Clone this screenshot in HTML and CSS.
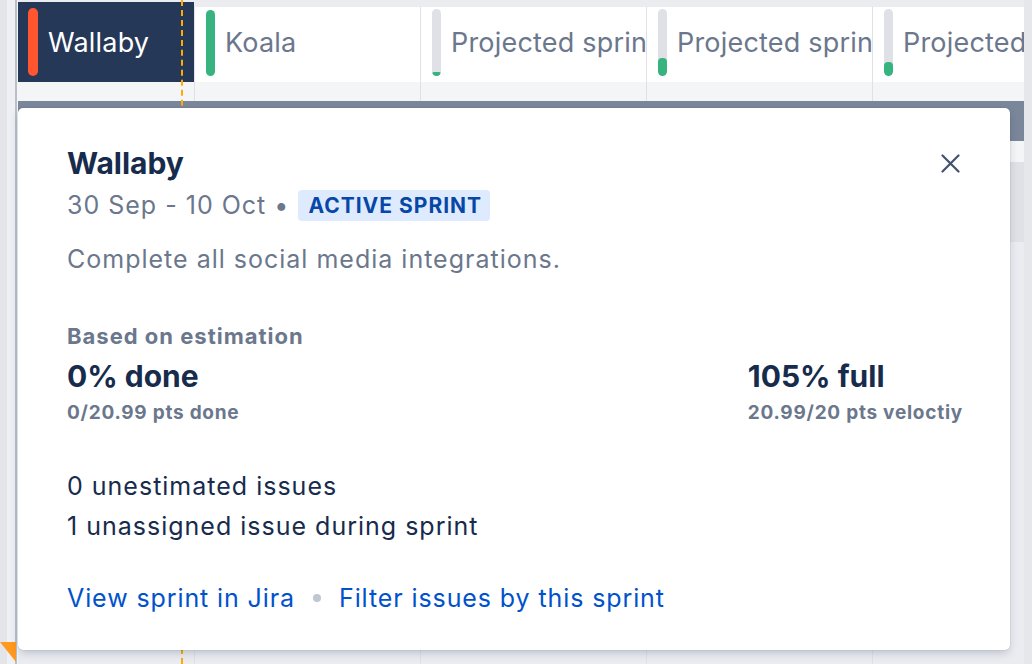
FILE: index.html
```html
<!DOCTYPE html>
<html>
<head>
    <meta charset="UTF-8">
    <title>Sprint details</title>
    <link rel="stylesheet" href="styles.css">
</head>
<body>
    <div class="screen">
        <div class="gutter">
            <span class="corner"></span>
        </div>

        <div class="board">
            <div class="sprints">
                <div class="sprint active">
                    <span class="status red"></span>
                    <span class="name">Wallaby</span>
                </div>
                <div class="sprint">
                    <span class="status green"></span>
                    <span class="name">Koala</span>
                </div>
                <div class="sprint">
                    <span class="status"><span class="fill" style="height: 4px"></span></span>
                    <span class="name">Projected sprint 1</span>
                </div>
                <div class="sprint">
                    <span class="status"><span class="fill" style="height: 18px"></span></span>
                    <span class="name">Projected sprint 2</span>
                </div>
                <div class="sprint">
                    <span class="status"><span class="fill" style="height: 14px"></span></span>
                    <span class="name">Projected sprint 3</span>
                </div>
            </div>

            <div class="row sub">
                <div></div><div></div><div></div><div></div><div></div>
            </div>
            <div class="row timeline"></div>
            <div class="row thin">
                <div></div><div></div><div></div><div></div><div></div>
            </div>
            <div class="row band">
                <div></div><div></div><div></div><div></div><div></div>
            </div>
            <div class="row rest">
                <div></div><div></div><div></div><div></div><div></div>
            </div>

            <div class="today"></div>
        </div>

        <div class="edge"></div>

        <div class="popup">
            <div class="popup-head">
                <div>
                    <h2>Wallaby</h2>
                    <div class="dates">
                        30 Sep - 10 Oct &bull;
                        <span class="lozenge">Active sprint</span>
                    </div>
                </div>
                <button class="close" aria-label="Close">
                    <svg width="19" height="19" viewBox="0 0 19 19">
                        <path d="M1.5 1.5 L17.5 17.5 M17.5 1.5 L1.5 17.5" stroke="#42526e" stroke-width="2.2" stroke-linecap="round" fill="none"/>
                    </svg>
                </button>
            </div>

            <p class="goal">Complete all social media integrations.</p>

            <div class="label">Based on estimation</div>
            <div class="stats">
                <div class="stat">
                    <div class="big">0% done</div>
                    <div class="small">0/20.99 pts done</div>
                </div>
                <div class="stat">
                    <div class="big">105% full</div>
                    <div class="small">20.99/20 pts veloctiy</div>
                </div>
            </div>

            <div class="issues">
                <div>0 unestimated issues</div>
                <div>1 unassigned issue during sprint</div>
            </div>

            <div class="links">
                <a href="#">View sprint in Jira</a>
                <span class="sep"></span>
                <a href="#">Filter issues by this sprint</a>
            </div>
        </div>
    </div>
</body>
</html>
```

FILE: styles.css
```css
body {
    margin: 0;
    background-color: #e6e7eb;
    font-family: Inter, "Noto Sans", sans-serif;
    color: #172b4d;
}
.screen {
    position: relative;
    display: flex;
    width: 1032px;
    height: 664px;
    overflow: hidden;
}
.gutter {
    position: relative;
    width: 18px;
    flex-shrink: 0;
    background: linear-gradient(to right, #e4e5e9 0 7px, #eff0f3 7px 15px, #b9c0ca 15px 17px, #f4f5f7 17px);
}
.corner {
    position: absolute;
    left: 0;
    bottom: 2px;
    width: 16px;
    height: 20px;
    background-color: #ff991f;
    clip-path: polygon(0 0, 100% 0, 100% 100%);
}
.board {
    position: relative;
    width: 1006px;
    padding-top: 7px;
    background-color: #ebecf0;
}
.edge {
    width: 8px;
    background-color: #e6e7eb;
}

/* sprint header */
.sprints {
    display: grid;
    grid-template-columns: 176px 226px 226px 226px 152px;
    height: 75px;
    background-color: white;
}
.sprint {
    display: flex;
    align-items: center;
    gap: 10px;
    padding-left: 11px;
    overflow: hidden;
    white-space: nowrap;
    border-left: 1px solid #dfe1e6;
}
.sprint.active {
    background-color: #253858;
    margin-top: -5px;
    padding-left: 10px;
    border-left: none;
}
.sprint .name {
    font-size: 27px;
    letter-spacing: 0.2px;
    color: #6b778c;
    margin-bottom: 4px;
}
.sprint.active .name {
    color: white;
    margin-bottom: 0;
}
.status {
    position: relative;
    flex-shrink: 0;
    width: 9px;
    height: 67px;
    border-radius: 5px;
    background-color: #dfe1e6;
    overflow: hidden;
    align-self: flex-end;
    margin-bottom: 6px;
}
.status.red {
    background-color: #ff5630;
    width: 10px;
    height: 68px;
}
.status.green {
    background-color: #36b37e;
    height: 66px;
}
.status .fill {
    position: absolute;
    left: 0;
    right: 0;
    bottom: 0;
    background-color: #36b37e;
    border-radius: 4px;
}

/* rows under the header */
.row {
    display: grid;
    grid-template-columns: 176px 226px 226px 226px 152px;
}
.row div + div {
    border-left: 1px solid #dfe1e6;
}
.sub {
    height: 19px;
    background-color: #f4f5f7;
}
.timeline {
    height: 40px;
    background-color: #7a869a;
}
.thin {
    height: 21px;
    background-color: #f4f5f7;
}
.band {
    height: 80px;
    background-color: #dfe1e6;
}
.band div + div {
    border-left-color: #d3d6dd;
}
.rest {
    height: 422px;
    background-color: #ebecf0;
}
.today {
    position: absolute;
    top: 0;
    bottom: 0;
    left: 163px;
    border-left: 2px dashed #ffab00;
}

/* popup */
.popup {
    position: absolute;
    left: 18px;
    top: 108px;
    width: 992px;
    height: 542px;
    box-sizing: border-box;
    padding: 37px 47px 0 49px;
    background-color: white;
    border-radius: 5px;
    box-shadow: 0 4px 10px -2px rgba(9, 30, 66, 0.25), 0 0 1px rgba(9, 30, 66, 0.31);
}
.popup-head {
    display: flex;
    justify-content: space-between;
    align-items: flex-start;
}
h2 {
    margin: 0;
    font-size: 30px;
    line-height: 36px;
    font-weight: 700;
}
.dates {
    display: flex;
    align-items: center;
    gap: 9px;
    margin-top: 7px;
    font-size: 25px;
    letter-spacing: 1px;
    line-height: 34px;
    color: #6b778c;
}
.lozenge {
    background-color: #deebff;
    color: #0747a6;
    font-size: 21px;
    font-weight: 700;
    letter-spacing: 1px;
    text-transform: uppercase;
    padding: 1px 8px 1px 10px;
    border-radius: 4px;
    line-height: 29px;
}
.close {
    border: none;
    background: none;
    padding: 0;
    margin-top: 9px;
    margin-right: 3px;
    width: 19px;
    height: 19px;
}
.goal {
    margin: 20px 0 0 0;
    font-size: 25px;
    letter-spacing: 1px;
    line-height: 34px;
    color: #6b778c;
}
.label {
    margin-top: 46px;
    font-size: 22px;
    letter-spacing: 1px;
    line-height: 28px;
    font-weight: 700;
    color: #6b778c;
}
.stats {
    display: flex;
    justify-content: space-between;
}
.big {
    margin-top: 5px;
    font-size: 30px;
    line-height: 42px;
    font-weight: 700;
}
.small {
    padding-top: 2px;
    font-size: 19px;
    letter-spacing: 0.75px;
    line-height: 28px;
    font-weight: 700;
    color: #6b778c;
}
.issues {
    margin-top: 39px;
    font-size: 25px;
    letter-spacing: 1px;
    line-height: 40px;
}
.links {
    display: flex;
    align-items: center;
    gap: 18px;
    margin-top: 35px;
    font-size: 25px;
    letter-spacing: 0.9px;
    line-height: 34px;
}
.links a {
    color: #0052cc;
    text-decoration: none;
}
.sep {
    width: 8px;
    height: 8px;
    border-radius: 50%;
    background-color: #c1c7d0;
}
```
